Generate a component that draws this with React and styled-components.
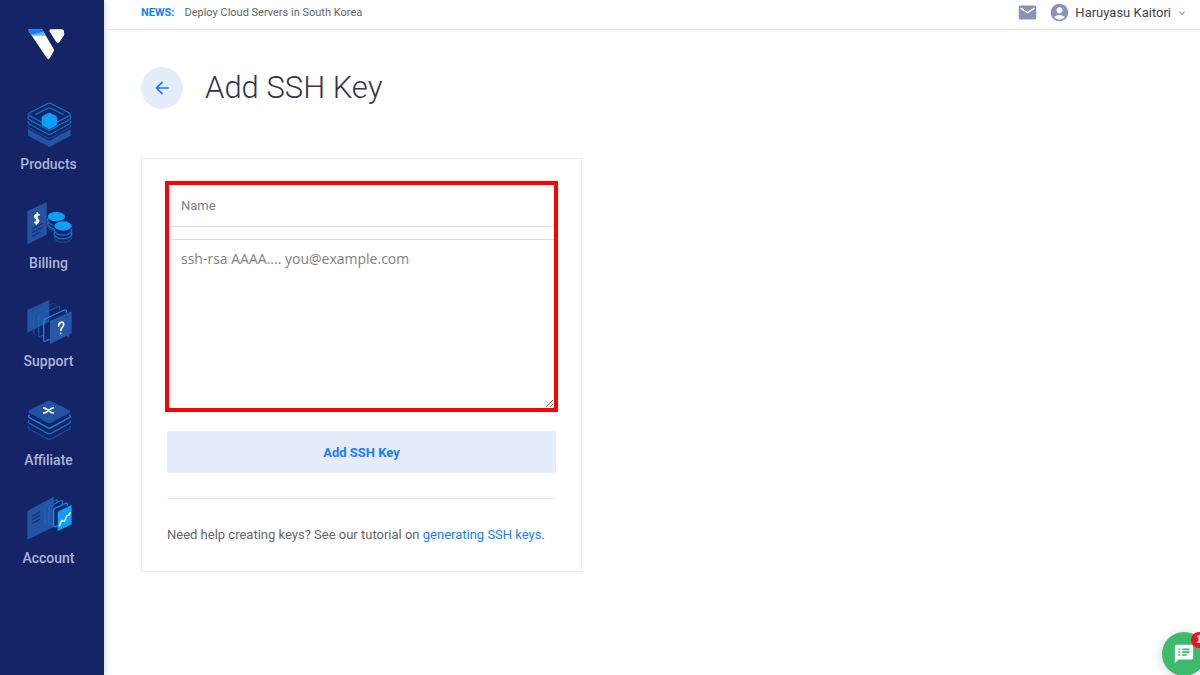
import React, {useState} from "react";
import styled, {createGlobalStyle} from 'styled-components';
import { MdEmail, MdAccountCircle, MdArrowBack, MdKeyboardArrowDown, MdSpeakerNotes } from 'react-icons/md';

const palette = {
  navy: '#152467',
  label: '#a9b4d6',
  blue: '#1a7dff',
  pale: '#e5ecfb',
  line: '#ebebed',
  text: '#65656b',
  icon: '#8793b8',
  solid: '#2353a3',
  bright: '#0a9ffb',
  stroke: '#116fc0',
}

const GlobalStyle = createGlobalStyle`
  * {
    box-sizing: border-box;
  }
  body {
    margin: 0;
    background-color: #fff;
    color: ${palette.text};
    font-family: Roboto, "Liberation Sans", sans-serif;
    font-size: 13px;
    overflow-x: hidden;
  }
`

const Page = styled.div`
  display: flex;
  min-height: 100vh;
`

const Sidebar = styled.aside`
  flex: none;
  width: 104px;
  padding: 28px 7px 0 0;
  background-color: ${palette.navy};
  box-shadow: 1px 0 6px rgba(21, 36, 103, 0.18);
`

const LogoLink = styled.a`
  display: block;
  width: 40px;
  height: 33px;
  margin: 0 0 40px 27px;
`

const Nav = styled.nav`
  display: grid;
  grid-auto-rows: 1fr;
  min-height: 493px;
`

const NavLink = styled.a`
  display: flex;
  flex-direction: column;
  align-items: center;
  gap: 7px;
  color: ${palette.label};
  font-size: 14px;
  font-weight: 500;
  line-height: 16px;
  text-decoration: none;
`

const Main = styled.div`
  flex: 1;
  min-width: 0;
`

const TopBar = styled.header`
  display: flex;
  justify-content: space-between;
  align-items: center;
  height: 30px;
  padding: 0 12px 4px 37px;
  border-bottom: 1px solid ${palette.line};
`

const News = styled.p`
  display: flex;
  gap: 10px;
  margin: 0;
  font-size: 11px;
  line-height: 16px;
`

const NewsTag = styled.strong`
  color: ${palette.blue};
`

const UserArea = styled.div`
  display: flex;
  align-items: center;
  gap: 11px;
`

const PlainButton = styled.button`
  display: flex;
  align-items: center;
  gap: 5px;
  padding: 0;
  border: 0;
  background: none;
  color: ${palette.icon};
  font: inherit;
  cursor: pointer;
`

const UserName = styled.span`
  color: #43434d;
  font-size: 13px;
`

const Content = styled.main`
  padding: 37px 37px 24px;
`

const TitleRow = styled.div`
  display: flex;
  align-items: center;
  gap: 22px;
  margin-bottom: 49px;
`

const BackLink = styled.a`
  display: flex;
  align-items: center;
  justify-content: center;
  width: 42px;
  height: 42px;
  border-radius: 50%;
  background-color: ${palette.pale};
  color: ${palette.blue};
`

const Title = styled.h1`
  margin: 0;
  color: #34344a;
  font-size: 31px;
  font-weight: 300;
  line-height: 42px;
`

const Card = styled.form`
  max-width: 441px;
  padding: 22px 23px;
  border: 1px solid ${palette.line};
`

const Fields = styled.div`
  display: flex;
  flex-direction: column;
  gap: 12px;
  border: 4px solid #ff0000;
`

const NameInput = styled.input`
  height: 42px;
  padding: 0 12px;
  border: 0;
  border-bottom: 1px solid #dfdfe2;
  border-radius: 0;
  outline: none;
  font-family: Roboto, sans-serif;
  font-size: 13px;
  &::placeholder {
    color: #808084;
  }
`

const KeyInput = styled.textarea`
  display: block;
  height: 169px;
  padding: 9px 12px;
  border: 0;
  border-top: 1px solid #dfdfe2;
  outline: none;
  font-family: "Open Sans", sans-serif;
  font-size: 14px;
  line-height: 20px;
  resize: vertical;
  &::placeholder {
    color: #808084;
  }
`

const CardFooter = styled.div`
  padding: 19px 2px 4px;
`

const SubmitButton = styled.button`
  width: 100%;
  height: 42px;
  border: 0;
  border-radius: 2px;
  background-color: ${palette.pale};
  color: ${palette.blue};
  font-family: inherit;
  font-size: 13px;
  font-weight: 700;
  cursor: pointer;
`

const HelpText = styled.p`
  margin: 25px 0 0;
  padding: 26px 0 0;
  border-top: 1px solid ${palette.line};
  line-height: 20px;
`

const HelpLink = styled.a`
  color: ${palette.blue};
  text-decoration: none;
`

const ChatButton = styled.button`
  position: fixed;
  right: -6px;
  bottom: -1px;
  display: flex;
  align-items: center;
  justify-content: center;
  width: 44px;
  height: 44px;
  padding: 0;
  border: 0;
  border-radius: 50%;
  background-color: #3dba6c;
  box-shadow: 0 1px 8px rgba(0, 0, 0, 0.2);
  color: #fff;
  cursor: pointer;
`

const Badge = styled.span`
  position: absolute;
  top: 0;
  right: -1px;
  width: 16px;
  height: 16px;
  border-radius: 50%;
  background-color: #fb0d1b;
  font-size: 10px;
  font-weight: 700;
  line-height: 16px;
`

const Icon = ({children}) => (
  <svg width="48" height="48" viewBox="0 0 144 144" fill="none" strokeWidth="4" strokeLinejoin="round" strokeLinecap="round" aria-hidden="true">
    {children}
  </svg>
)

const Logo = () => (
  <svg width="40" height="33" viewBox="0 0 120 99" aria-hidden="true">
    <path d="M8 4H42Q45 4 47 7L80 63Q82 66 80 70L68 91Q64 96 60 91L5 9Q3 4 8 4Z" fill="#fff" />
    <path d="M8 4H42Q45 4 47 7L56 23H15L5 9Q3 4 8 4Z" fill="#51b9ff" />
    <path d="M8 4H42Q45 4 47 7L49 11L13 20L5 9Q3 4 8 4Z" fill="#1779f5" />
    <path d="M71 4H105Q108 4 110 7L112 17Q112 20 110 23L97 43Q92 48 88 43L67 9Q66 4 71 4Z" fill="#fff" />
  </svg>
)

const ProductsIcon = () => (
  <Icon>
    <path d="M9 84L73 119L137 84V104L73 138L9 104Z" fill={palette.solid} />
    <g stroke={palette.stroke}>
      <path d="M13 36L68 8Q73 5 78 8L133 36Q139 40 133 44L78 73Q73 76 68 73L13 44Q7 40 13 36Z" />
      <path d="M32 40L68 22Q73 19 78 22L114 40" />
      <path d="M9 46V51Q9 54 13 56L68 86Q73 89 78 86L133 56Q137 54 137 51V46" />
      <path d="M9 61Q9 66 13 69L68 99Q73 102 78 99L133 69Q137 66 137 61" />
      <path d="M9 73Q9 78 13 81L68 111Q73 114 78 111L133 81Q137 78 137 73" opacity=".5" />
    </g>
    <path d="M70 36Q73 34 76 36L93 45Q96 47 96 50V69Q96 72 93 74L76 83Q73 85 70 83L53 74Q50 72 50 69V50Q50 47 53 45Z" fill={palette.bright} />
  </Icon>
)

const BillingIcon = () => (
  <Icon>
    <path d="M7 34L65 6V104L7 133Z" fill={palette.solid} />
    <path d="M22 86L52 71M22 97L52 82M22 108L44 97" stroke="#153277" />
    <path d="M42 45Q38 40 33 44Q27 49 31 54L38 58Q43 62 39 67Q34 71 29 67M37 38L34 72" stroke="#fff" strokeWidth="5" />
    <g stroke={palette.stroke}>
      <path d="M68 56V62Q73 74 90 76M68 68V73Q73 84 87 86" />
      <path d="M68 80Q73 89 86 91" opacity=".5" />
      <path d="M88 87V92Q93 105 114 105T140 92V87" />
      <path d="M88 98V104Q93 116 114 116T140 104V98" />
      <path d="M88 109V114Q93 127 114 127T140 114V109" opacity=".5" />
    </g>
    <ellipse cx="94" cy="50" rx="26" ry="14" fill={palette.bright} />
    <ellipse cx="114" cy="78" rx="29" ry="17" fill={palette.navy} />
    <ellipse cx="114" cy="78" rx="26" ry="14" fill={palette.bright} />
  </Icon>
)

const SupportIcon = () => (
  <Icon>
    <path d="M7 36L73 6V71L7 104Z" fill={palette.solid} />
    <g stroke={palette.stroke}>
      <path d="M26 102V51Q26 47 30 45L84 17Q90 14 90 20V24" opacity=".35" />
      <path d="M34 112L26 108V98" opacity=".35" />
      <path d="M104 32V29Q104 23 98 26L45 51Q41 53 41 57V112Q41 118 47 115L54 112" opacity=".65" />
      <path d="M124 43V39Q124 33 118 36L60 63Q56 65 56 69V126Q56 132 62 129L73 124" stroke="#148be0" />
    </g>
    <path d="M75 69L140 39V106L133 109V119L125 113L75 138Z" fill="#2558a9" />
    <path d="M101 85Q101 75 108 73Q116 71 116 79Q116 85 111 89Q108 92 108 97M107 106V107" stroke="#fff" strokeWidth="5" />
  </Icon>
)

const AffiliateIcon = () => (
  <Icon>
    <g stroke={palette.stroke}>
      <path d="M13 54Q7 58 13 62L68 92Q73 95 78 92L133 62Q139 58 133 54" stroke="#148be0" />
      <path d="M10 72Q8 76 13 79L68 109Q73 112 78 109L133 79Q138 76 136 72" />
      <path d="M10 88Q8 93 13 96L68 126Q73 129 78 126L133 96Q138 93 136 88" opacity=".6" />
    </g>
    <path d="M68 12Q73 9 78 12L133 40Q139 44 133 48L78 77Q73 80 68 77L13 48Q7 44 13 40Z" fill={palette.solid} />
    <path d="M56 33L63 35L78 46L85 48M85 32L78 35L63 46L56 48" stroke="#fff" strokeWidth="5" />
  </Icon>
)

const AccountIcon = () => (
  <Icon>
    <path d="M7 48L86 5V96L7 134Z" fill={palette.solid} />
    <path d="M22 63L44 51M22 74L44 62M22 85L44 73" stroke="#153277" />
    <g stroke={palette.stroke}>
      <path d="M97 16V13L64 29Q59 31 59 36V79Q59 84 64 82" opacity=".6" />
      <path d="M112 26V20Q112 14 107 17L76 33Q72 35 72 40V84Q72 90 77 87L84 84" />
      <path d="M127 31V28Q127 22 122 25L90 40Q86 42 86 47V91Q86 97 91 95L97 92" stroke="#148be0" />
    </g>
    <path d="M98 50L140 30V88L98 108Z" fill={palette.bright} />
    <path d="M103 93L110 76L118 80L126 61L131 62L136 53" stroke="#fff" />
  </Icon>
)

const menu = [
  { name: 'Products', icon: ProductsIcon },
  { name: 'Billing', icon: BillingIcon },
  { name: 'Support', icon: SupportIcon },
  { name: 'Affiliate', icon: AffiliateIcon },
  { name: 'Account', icon: AccountIcon },
]

const SideMenu = () => (
  <Sidebar>
    <LogoLink href="#home" aria-label="Home"><Logo /></LogoLink>
    <Nav>
      {menu.map(({name, icon: MenuIcon}) => (
        <NavLink href={`#${name.toLowerCase()}`} key={name}>
          <MenuIcon />
          {name}
        </NavLink>
      ))}
    </Nav>
  </Sidebar>
)

const Header = () => (
  <TopBar>
    <News>
      <NewsTag>NEWS:</NewsTag>
      <span>Deploy Cloud Servers in South Korea</span>
    </News>
    <UserArea>
      <PlainButton type="button" aria-label="Messages"><MdEmail size={21} /></PlainButton>
      <PlainButton type="button">
        <MdAccountCircle size={21} />
        <UserName>Haruyasu Kaitori</UserName>
        <MdKeyboardArrowDown size={12} />
      </PlainButton>
    </UserArea>
  </TopBar>
)

const KeyForm = () => {
  const [name, setName] = useState('');
  const [sshKey, setSshKey] = useState('');

  return (
    <Card onSubmit={(e) => e.preventDefault()}>
      <Fields>
        <NameInput type="text" aria-label="Name" placeholder="Name" value={name} onChange={(e) => setName(e.target.value)} />
        <KeyInput aria-label="SSH key" placeholder="ssh-rsa AAAA.... you@example.com" value={sshKey} onChange={(e) => setSshKey(e.target.value)} />
      </Fields>
      <CardFooter>
        <SubmitButton type="submit">Add SSH Key</SubmitButton>
        <HelpText>
          Need help creating keys? See our tutorial on <HelpLink href="#tutorial">generating SSH keys</HelpLink>.
        </HelpText>
      </CardFooter>
    </Card>
  )
}

const App = () => (
  <Page>
    <GlobalStyle />
    <SideMenu />
    <Main>
      <Header />
      <Content>
        <TitleRow>
          <BackLink href="#keys" aria-label="Back"><MdArrowBack size={20} /></BackLink>
          <Title>Add SSH Key</Title>
        </TitleRow>
        <KeyForm />
      </Content>
    </Main>
    <ChatButton type="button" aria-label="Chat">
      <MdSpeakerNotes size={22} />
      <Badge>1</Badge>
    </ChatButton>
  </Page>
)

export default App;
